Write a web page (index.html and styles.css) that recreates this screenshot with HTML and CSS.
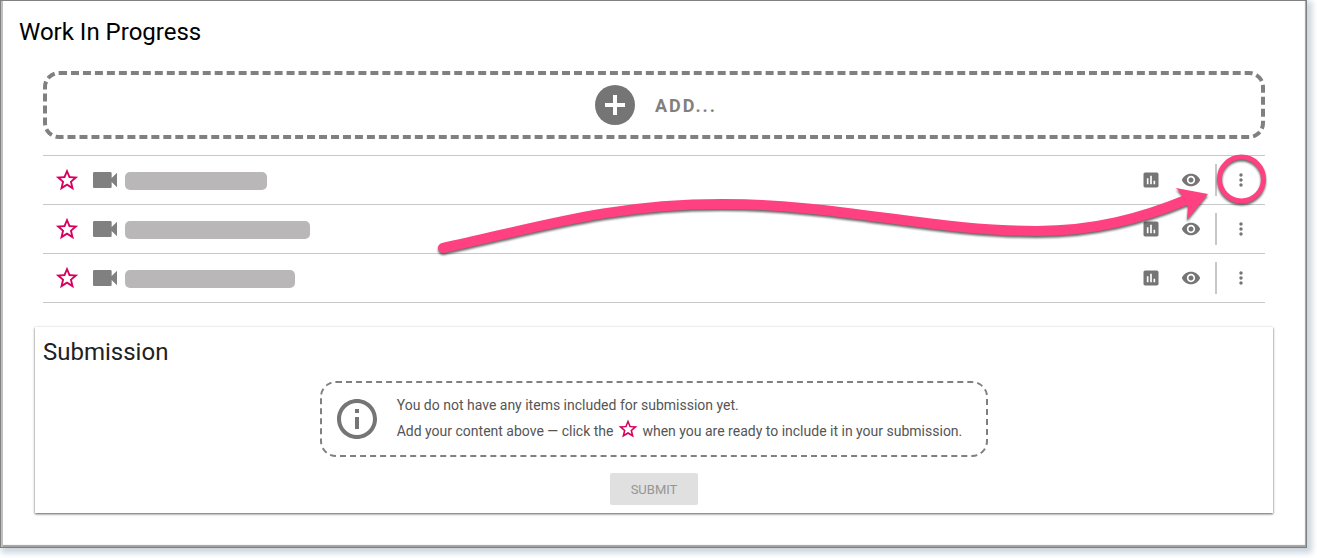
FILE: index.html
```html
<!DOCTYPE html>
<html lang="en">

<head>
  <meta charset="UTF-8">
  <meta name="viewport" content="width=device-width, initial-scale=1.0">
  <title>Work In Progress</title>
  <link rel="stylesheet" href="styles.css">
</head>

<body>
  <!-- Shared icons -->
  <svg class="icon-defs" aria-hidden="true">
    <symbol id="icon-star" viewBox="0 0 24 24">
      <path d="M22.3 8.9l-7.4-.3L12 1.6 9.1 8.6 1.7 8.9l5.7 4.9L5.6 21.4 12 17.4l6.4 4-1.8-7.6 5.7-4.9zM12 15.2l-3.7 2.3 1-4.2-3.3-2.9 4.3-.3L12 6.1l1.7 4 4.3.3-3.3 2.9 1 4.2L12 15.2z"/>
    </symbol>
    <symbol id="icon-video" viewBox="0 0 24 24">
      <path d="M17 10.5V7c0-.55-.45-1-1-1H4c-.55 0-1 .45-1 1v10c0 .55.45 1 1 1h12c.55 0 1-.45 1-1v-3.5l4 4v-11l-4 4z"/>
    </symbol>
    <symbol id="icon-chart" viewBox="0 0 24 24">
      <path d="M19 3H5c-1.1 0-2 .9-2 2v14c0 1.1.9 2 2 2h14c1.1 0 2-.9 2-2V5c0-1.1-.9-2-2-2zM9 17H7v-7h2v7zm4 0h-2V7h2v10zm4 0h-2v-4h2v4z"/>
    </symbol>
    <symbol id="icon-eye" viewBox="0 0 24 24">
      <path d="M12 4.5C7 4.5 2.73 7.61 1 12c1.73 4.39 6 7.5 11 7.5s9.27-3.11 11-7.5c-1.73-4.39-6-7.5-11-7.5zM12 17c-2.76 0-5-2.24-5-5s2.24-5 5-5 5 2.24 5 5-2.24 5-5 5zm0-8c-1.66 0-3 1.34-3 3s1.34 3 3 3 3-1.34 3-3-1.34-3-3-3z"/>
    </symbol>
    <symbol id="icon-more" viewBox="0 0 24 24">
      <path d="M12 8c1.1 0 2-.9 2-2s-.9-2-2-2-2 .9-2 2 .9 2 2 2zm0 2c-1.1 0-2 .9-2 2s.9 2 2 2 2-.9 2-2-.9-2-2-2zm0 6c-1.1 0-2 .9-2 2s.9 2 2 2 2-.9 2-2-.9-2-2-2z"/>
    </symbol>
  </svg>

  <main class="frame">
    <h1>Work In Progress</h1>

    <section class="work">
      <button class="add-btn" type="button">
        <svg class="add-icon" viewBox="0 0 40 40" aria-hidden="true">
          <circle cx="20" cy="20" r="20"/>
          <path d="M10 20h20M20 10v20"/>
        </svg>
        <span>ADD...</span>
      </button>

      <div class="list-wrap">
        <ul class="items">
          <li class="item">
            <button class="star-btn" type="button" aria-label="Include in submission"><svg><use href="#icon-star"/></svg></button>
            <svg class="video-icon" aria-hidden="true"><use href="#icon-video"/></svg>
            <span class="item-name name-short"></span>
            <div class="actions">
              <button type="button" aria-label="Statistics"><svg><use href="#icon-chart"/></svg></button>
              <button type="button" aria-label="Preview"><svg><use href="#icon-eye"/></svg></button>
              <span class="divider"></span>
              <button type="button" aria-label="More options"><svg><use href="#icon-more"/></svg></button>
            </div>
          </li>
          <li class="item">
            <button class="star-btn" type="button" aria-label="Include in submission"><svg><use href="#icon-star"/></svg></button>
            <svg class="video-icon" aria-hidden="true"><use href="#icon-video"/></svg>
            <span class="item-name name-long"></span>
            <div class="actions">
              <button type="button" aria-label="Statistics"><svg><use href="#icon-chart"/></svg></button>
              <button type="button" aria-label="Preview"><svg><use href="#icon-eye"/></svg></button>
              <span class="divider"></span>
              <button type="button" aria-label="More options"><svg><use href="#icon-more"/></svg></button>
            </div>
          </li>
          <li class="item">
            <button class="star-btn" type="button" aria-label="Include in submission"><svg><use href="#icon-star"/></svg></button>
            <svg class="video-icon" aria-hidden="true"><use href="#icon-video"/></svg>
            <span class="item-name name-medium"></span>
            <div class="actions">
              <button type="button" aria-label="Statistics"><svg><use href="#icon-chart"/></svg></button>
              <button type="button" aria-label="Preview"><svg><use href="#icon-eye"/></svg></button>
              <span class="divider"></span>
              <button type="button" aria-label="More options"><svg><use href="#icon-more"/></svg></button>
            </div>
          </li>
        </ul>

        <!-- Arrow pointing at the options menu of the first item -->
        <svg class="pointer" viewBox="425 145 850 120" aria-hidden="true">
          <path class="pointer-line" d="M443 248C540 227 610 204 722 204C840 204 930 231 1037 231C1095 231 1142 218 1186 200"/>
          <path class="pointer-head" d="M1208 194L1176 188L1184 197L1188 207L1187 220Z"/>
          <circle class="pointer-ring" cx="1241.5" cy="179" r="22"/>
        </svg>
      </div>
    </section>

    <section class="submission">
      <h2>Submission</h2>
      <div class="notice">
        <svg class="info-icon" viewBox="0 0 24 24" aria-hidden="true">
          <path d="M11 17h2v-6h-2v6zm1-15C6.48 2 2 6.48 2 12s4.48 10 10 10 10-4.48 10-10S17.52 2 12 2zm0 18c-4.41 0-8-3.59-8-8s3.59-8 8-8 8 3.59 8 8-3.59 8-8 8zM11 9h2V7h-2v2z"/>
        </svg>
        <div class="notice-text">
          <p>You do not have any items included for submission yet.</p>
          <p>Add your content above — click the <svg class="star-inline" aria-label="star"><use href="#icon-star"/></svg> when you are ready to include it in your submission.</p>
        </div>
      </div>
      <button class="submit-btn" type="button" disabled>SUBMIT</button>
    </section>
  </main>
</body>

</html>
```

FILE: styles.css
```css
* {
  box-sizing: border-box;
}

body {
  margin: 0;
  padding: 0 10px 10px 0;
  background-color: #ffffff;
  font-family: Roboto, sans-serif;
}

button {
  padding: 0;
  border: none;
  background: none;
  font-family: inherit;
  cursor: pointer;
}

svg {
  fill: #757575;
}

.icon-defs {
  display: none;
}

.frame {
  padding: 17px 33px 34px 34px;
  border: 1px solid #808080;
  box-shadow: inset 2px 0 0 #c0c0c0, inset -1px -2px 1px #a0a0a0, 3px 3px 6px 2px #ccd6de;
}

h1,
h2 {
  margin: 0;
  font-size: 24px;
  font-weight: 400;
  line-height: 28px;
}

h1 {
  margin-left: -16px;
  color: #000000;
}

h2 {
  color: #212121;
}

.work {
  margin: 25px 8px 24px;
}

.add-btn {
  display: flex;
  align-items: center;
  justify-content: center;
  gap: 20px;
  width: 100%;
  height: 68px;
  padding-left: 4px;
  border: 4px dashed #808080;
  border-radius: 16px;
  color: #808080;
  font-size: 18px;
  font-weight: 700;
  letter-spacing: 2px;
}

.add-icon {
  width: 40px;
  height: 40px;
}

.add-icon path {
  stroke: #ffffff;
  stroke-width: 4;
}

/* Item list */
.list-wrap {
  position: relative;
  margin-top: 16px;
}

.items {
  margin: 0;
  padding: 0;
  list-style: none;
  border-top: 1px solid #c8c8c8;
}

.item {
  display: flex;
  align-items: center;
  height: 49px;
  padding: 0 4px 0 11px;
  border-bottom: 1px solid #c8c8c8;
}

.star-btn,
.star-btn svg {
  display: block;
  width: 26px;
  height: 26px;
}

.star-btn svg,
.star-inline {
  fill: #d8005f;
}

.video-icon {
  width: 32px;
  height: 32px;
  margin: 0 4px 0 9px;
  fill: #808080;
}

.item-name {
  height: 18px;
  margin-top: 2px;
  border-radius: 5px;
  background-color: #b9b7b8;
}

.name-short {
  width: 142px;
}

.name-long {
  width: 185px;
}

.name-medium {
  width: 170px;
}

.actions {
  display: flex;
  align-items: center;
  margin-left: auto;
}

.actions button {
  display: flex;
  align-items: center;
  justify-content: center;
  width: 40px;
  height: 40px;
}

.actions svg {
  width: 20px;
  height: 20px;
}

.divider {
  width: 2px;
  height: 32px;
  margin: 0 4px;
  background-color: #c8c8c8;
}

.pointer {
  position: absolute;
  top: -10px;
  right: -10px;
  width: 850px;
  height: 120px;
  pointer-events: none;
  filter: drop-shadow(0 2px 1px rgba(0, 0, 0, 0.6));
}

.pointer-line,
.pointer-ring {
  fill: none;
  stroke: #ff4081;
}

.pointer-line {
  stroke-width: 10;
  stroke-linecap: round;
}

.pointer-ring {
  stroke-width: 5;
}

.pointer-head {
  fill: #ff4081;
}

/* Submission card */
.submission {
  display: flex;
  flex-direction: column;
  align-items: center;
  padding: 11px 8px 8px;
  box-shadow: 0 1px 2px rgba(0, 0, 0, 0.5), 0 1px 3px rgba(0, 0, 0, 0.2);
}

.submission h2 {
  align-self: flex-start;
}

.notice {
  display: flex;
  align-items: center;
  gap: 16px;
  margin: 15px 0 16px;
  padding: 9px 24px 9px 11px;
  border: 2px dashed #808080;
  border-radius: 16px;
}

.info-icon {
  width: 48px;
  height: 48px;
}

.notice-text {
  padding-bottom: 2px;
  color: #555555;
  font-size: 14px;
  line-height: 26px;
}

.notice-text p {
  margin: 0;
}

.star-inline {
  width: 22px;
  height: 22px;
  margin: -4px 0;
}

.submit-btn {
  width: 88px;
  height: 32px;
  border-radius: 2px;
  background-color: #e0e0e0;
  color: #959595;
  font-size: 13px;
  cursor: default;
}
```
